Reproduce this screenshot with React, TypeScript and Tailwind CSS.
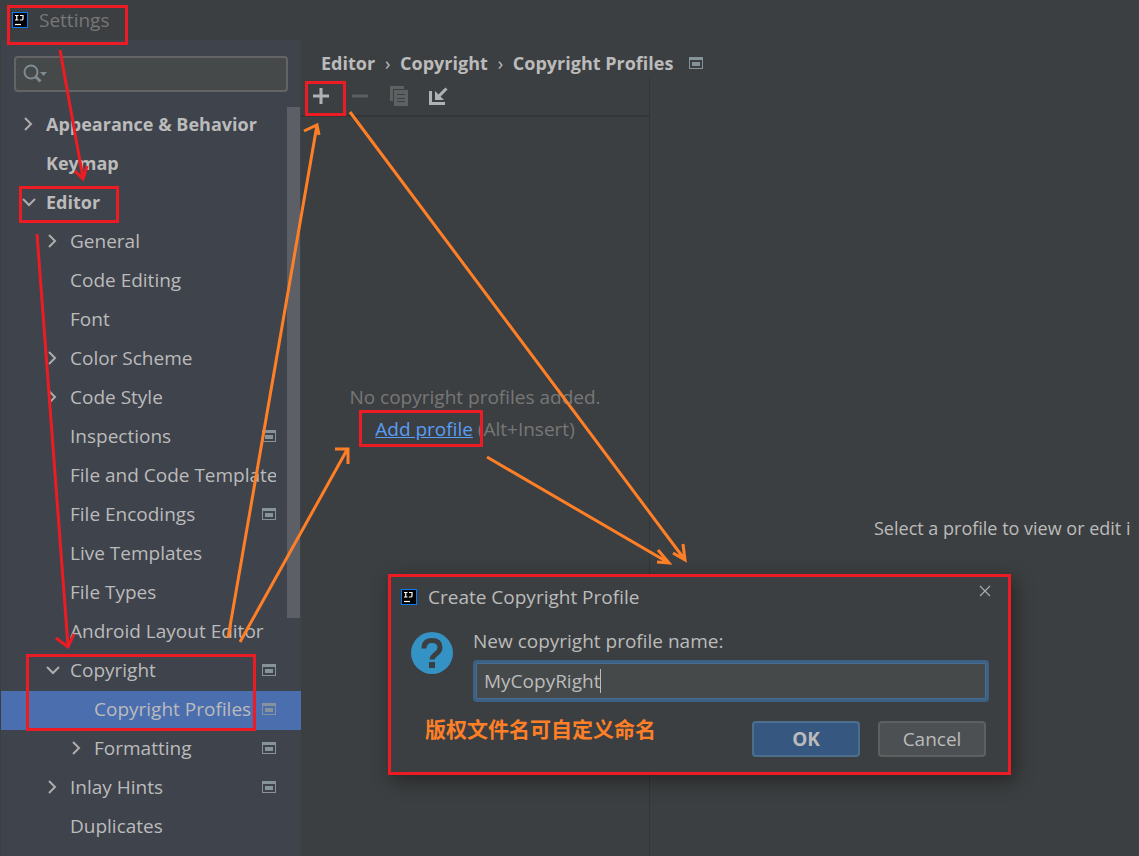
import React, { useState } from 'react';

interface TreeItem {
    label: string;
    depth: 0 | 1 | 2;
    state?: 'open' | 'closed';
    project?: boolean;
}

const TREE: TreeItem[] = [
    { label: 'Appearance & Behavior', depth: 0, state: 'closed' },
    { label: 'Keymap', depth: 0 },
    { label: 'Editor', depth: 0, state: 'open' },
    { label: 'General', depth: 1, state: 'closed' },
    { label: 'Code Editing', depth: 1 },
    { label: 'Font', depth: 1 },
    { label: 'Color Scheme', depth: 1, state: 'closed' },
    { label: 'Code Style', depth: 1, state: 'closed' },
    { label: 'Inspections', depth: 1, project: true },
    { label: 'File and Code Templates', depth: 1 },
    { label: 'File Encodings', depth: 1, project: true },
    { label: 'Live Templates', depth: 1 },
    { label: 'File Types', depth: 1 },
    { label: 'Android Layout Editor', depth: 1 },
    { label: 'Copyright', depth: 1, state: 'open', project: true },
    { label: 'Copyright Profiles', depth: 2, project: true },
    { label: 'Formatting', depth: 2, state: 'closed', project: true },
    { label: 'Inlay Hints', depth: 1, state: 'closed', project: true },
    { label: 'Duplicates', depth: 1 },
];

const INDENT = {
    0: 'pl-[18px] text-[18px] font-bold',
    1: 'pl-[42px]',
    2: 'pl-[66px]',
};

const IdeaLogo = () => (
    <svg width="16" height="16" viewBox="0 0 16 16" className="shrink-0">
        <rect width="16" height="16" fill="#087cfa" />
        <rect x="1" y="1" width="14" height="14" fill="#000" />
        <path d="M3 3.500h3.500M4.750 3.500v4.500M3 8h3.500M8 3.500h3v3.200q0 1.300-1.300 1.300H7.800" fill="none" stroke="#fff" strokeWidth="1.200" />
        <path d="M3 12.500h6" stroke="#fff" strokeWidth="1.200" />
    </svg>
);

const ProjectIcon = () => (
    <svg width="14" height="12" viewBox="0 0 14 12" className="shrink-0" fill="#87939a">
        <path fillRule="evenodd" d="M0 0h14v12H0zM1 3v8h12V3z" />
        <rect x="3" y="5" width="8" height="4" />
    </svg>
);

const Chevron = ({ state }: { state?: 'open' | 'closed' }) => (
    <svg width="20" height="20" viewBox="0 0 20 20" fill="none" stroke="#adadad" strokeWidth="2" className="shrink-0">
        {state === 'closed' && <path d="M6 4l6 6-6 6" />}
        {state === 'open' && <path d="M4 7l6 6 6-6" />}
    </svg>
);

const Sidebar = () => {
    const [selected, setSelected] = useState('Copyright Profiles');

    return (
        <aside className="w-[300px] shrink-0 bg-[#3f434c] pt-4">
            <label className="mx-[13px] flex h-9 items-center rounded border-2 border-[#646464] bg-[#45494a] pl-[7px]">
                <svg width="26" height="20" viewBox="0 0 26 20" fill="none" stroke="#7f8b91" strokeWidth="2">
                    <circle cx="8" cy="8" r="6.5" />
                    <path d="M12.5 12.5l5 5" strokeWidth="3" />
                    <path d="M17 8h7l-3.5 4z" fill="#7f8b91" stroke="none" />
                </svg>
                <input type="text" aria-label="Search settings" className="min-w-0 flex-1 bg-transparent outline-none" />
            </label>
            <div className="relative mt-[14px]">
                <ul>
                    {TREE.map(item => (
                        <li key={item.label}>
                            <button
                                type="button"
                                onClick={() => setSelected(item.label)}
                                className={`flex h-[39px] w-full items-center pr-[25px] pb-1 text-left ${INDENT[item.depth]} ${selected === item.label ? 'bg-[#4b6eaf]' : ''}`}
                            >
                                <Chevron state={item.state} />
                                <span className="ml-[7px] min-w-0 flex-1 overflow-hidden whitespace-nowrap">{item.label}</span>
                                {item.project && <ProjectIcon />}
                            </button>
                        </li>
                    ))}
                </ul>
                <div className="absolute top-px right-px h-[511px] w-[13px] bg-[#5c5f66]"></div>
            </div>
        </aside>
    );
};

const Breadcrumbs = () => (
    <nav className="flex h-[38px] items-center pt-2 pl-5 text-[18px] font-bold">
        <span>Editor</span>
        <span className="w-[25px] text-center font-normal">›</span>
        <span>Copyright</span>
        <span className="w-[25px] text-center font-normal">›</span>
        <span className="mr-4">Copyright Profiles</span>
        <ProjectIcon />
    </nav>
);

const Toolbar = () => (
    <div className="flex h-[39px] items-center gap-[19px] border-b-2 border-[#333536] pb-0.5 pl-[10px]">
        <button type="button" aria-label="Add">
            <svg width="20" height="20" viewBox="0 0 20 20" stroke="#afb1b3" strokeWidth="3">
                <path d="M10 2v16M2 10h16" />
            </svg>
        </button>
        <button type="button" aria-label="Remove">
            <svg width="20" height="20" viewBox="0 0 20 20" stroke="#5b5d5f" strokeWidth="3">
                <path d="M2 10h16" />
            </svg>
        </button>
        <button type="button" aria-label="Copy">
            <svg width="20" height="20" viewBox="0 0 20 20" fill="#5e6061">
                <path d="M1 0h14v3H4v12H1z" />
                <path fillRule="evenodd" d="M5 4h14v16H5zM8 8v1h8V8zM8 12v1h8v-1zM8 15v1h8v-1z" />
            </svg>
        </button>
        <button type="button" aria-label="Import">
            <svg width="20" height="20" viewBox="0 0 20 20" fill="none" stroke="#afb1b3" strokeWidth="3">
                <path d="M2.500 5v12.500H17" />
                <path d="M18.500 2.500L10 11" />
                <path d="M7 5v9h9z" fill="#afb1b3" stroke="none" />
            </svg>
        </button>
    </div>
);

const ProfileDialog = () => {
    const [name, setName] = useState('MyCopyRight');

    return (
        <div
            role="dialog"
            aria-label="Create Copyright Profile"
            className="absolute top-[574px] left-[388px] flex w-[623px] flex-col border-3 border-[#ed1c24] bg-[#3c3f41] pb-[15px] shadow-[4px_6px_18px_rgba(0,0,0,0.4)]"
        >
            <div className="flex h-10 items-center pr-[17px] pl-[10px]">
                <IdeaLogo />
                <h2 className="ml-[11px] flex-1">Create Copyright Profile</h2>
                <button type="button" aria-label="Close" className="mb-3">
                    <svg width="12" height="12" viewBox="0 0 12 12" stroke="#a8aaab" strokeWidth="1.2">
                        <path d="M1 1l10 10M11 1L1 11" />
                    </svg>
                </button>
            </div>
            <div className="flex gap-5 pt-3 pr-[19px] pl-5">
                <svg width="42" height="42" viewBox="0 0 42 42" className="mt-[3px] shrink-0">
                    <circle cx="21" cy="21" r="21" fill="#3592c4" />
                    <path d="M13 16.500q0-8 8-8t8 7q0 3.500-4 6.500t-4 5.500" fill="none" stroke="#3c3f41" strokeWidth="5" />
                    <rect x="18" y="30" width="6" height="6" fill="#3c3f41" />
                </svg>
                <div className="flex flex-1 flex-col gap-[7px]">
                    <label htmlFor="profile-name" className="leading-6">New copyright profile name:</label>
                    <div className="flex h-[42px] items-center rounded border-3 border-[#3d6185] bg-[#45494a] pl-2 ring-1 ring-[#466d94] ring-inset">
                        <input
                            id="profile-name"
                            type="text"
                            value={name}
                            onChange={e => setName(e.target.value)}
                            className="field-sizing-content min-w-4 bg-transparent outline-none"
                        />
                        <span className="h-6 w-px bg-[#bbbbbb]"></span>
                    </div>
                </div>
            </div>
            <div className="flex items-start gap-[18px] pt-[19px] pr-[22px] pl-[34px]">
                <p className="flex-1 text-[21px] leading-4 font-bold text-[#ff7f27]">版权文件名可自定义命名</p>
                <button type="button" className="h-9 w-[108px] rounded border-2 border-[#4c708c] bg-[#365880] font-bold">OK</button>
                <button type="button" className="h-9 w-[108px] rounded border-2 border-[#5e6060] bg-[#4c5052]">Cancel</button>
            </div>
        </div>
    );
};

// Marker boxes and arrows drawn over the whole window
const Annotations = () => (
    <svg width="1139" height="856" viewBox="0 0 1139 856" fill="none" strokeWidth="3" className="pointer-events-none absolute top-0 left-0">
        <g stroke="#ed1c24">
            <rect x="8.500" y="6.500" width="118" height="37" />
            <rect x="20.500" y="187.500" width="97" height="34" />
            <rect x="27.500" y="655.500" width="227" height="74" />
            <rect x="306.500" y="82.500" width="38" height="32" />
            <rect x="360.500" y="411.500" width="121" height="34" />
            <path d="M60 50L83 178M75 171l8 8 4-13" />
            <path d="M37 234L68 646M56 638l12 9 6-13" />
        </g>
        <g stroke="#ff7f27">
            <path d="M228 638L317 125M304 131l13-6 2 10" />
            <path d="M240 642L348 448M335 449h13v15" />
            <path d="M350 112L685 560M673 553l12 7-2-16" />
            <path d="M487 457L669 563M657 562l12 1-11-13" />
        </g>
    </svg>
);

export default function App() {
    return (
        <div className="relative flex min-h-screen w-full flex-col overflow-hidden bg-[#3c3f41] pl-px font-['Open_Sans','Noto_Sans_CJK_SC',sans-serif] text-[19px] leading-8 text-[#bbbbbb]">
            <header className="flex h-10 items-center gap-[11px] pl-[11px] text-[#777777]">
                <IdeaLogo />
                <h1>Settings</h1>
            </header>
            <div className="flex flex-1">
                <Sidebar />
                <main className="flex min-w-0 flex-1 flex-col">
                    <Breadcrumbs />
                    <div className="flex flex-1">
                        <section className="w-[349px] shrink-0 border-r border-[#333536]">
                            <Toolbar />
                            <div className="pt-[264px] text-center text-[#777777]">
                                <p>No copyright profiles added.</p>
                                <p><a href="#add" className="text-[#589df6] underline">Add profile</a> (Alt+Insert)</p>
                            </div>
                        </section>
                        <section className="min-w-0 flex-1 overflow-hidden pt-[434px] pl-56 text-[18px] whitespace-nowrap">
                            <p>Select a profile to view or edit i</p>
                        </section>
                    </div>
                </main>
            </div>
            <ProfileDialog />
            <Annotations />
        </div>
    );
}
